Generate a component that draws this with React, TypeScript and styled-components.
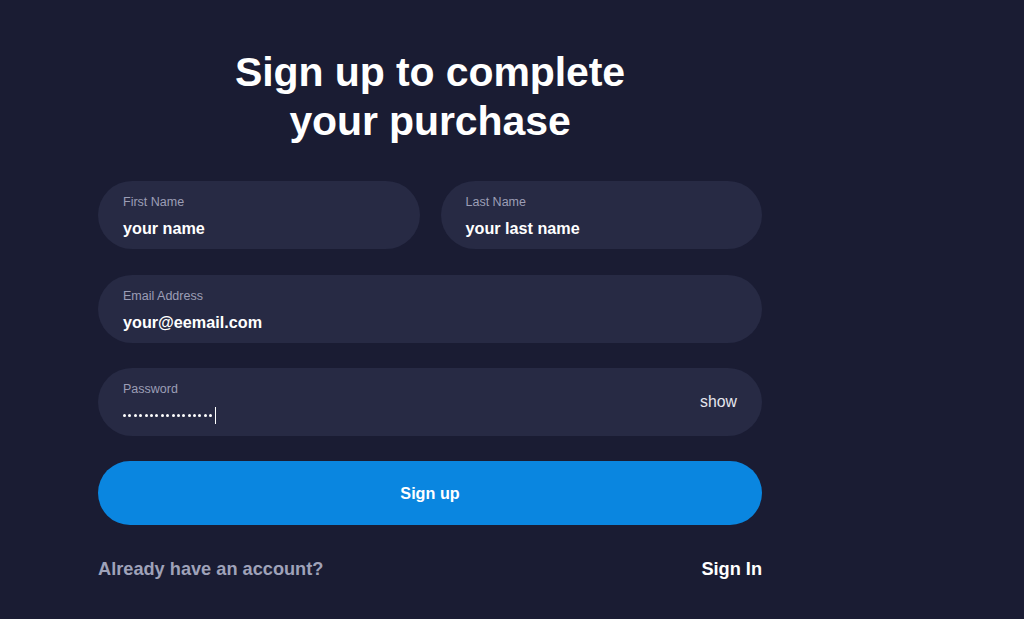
import React from "react";
import styled, { createGlobalStyle } from "styled-components";

const Global = createGlobalStyle`
  html, body { margin: 0; padding: 0; background: #1a1c33; }
  body { font-family: "Liberation Sans", Arial, sans-serif; }
  * { box-sizing: border-box; }
`;

const Page = styled.div`
  width: 1024px;
  height: 619px;
  background: #1a1c33;
  overflow: hidden;
  padding: 48px 0 0 98px;
`;

const Form = styled.div`
  width: 664px;
  display: flex;
  flex-direction: column;
`;

const Title = styled.h1`
  margin: 0 0 35px;
  text-align: center;
  color: #ffffff;
  font-size: 41px;
  font-weight: 700;
  line-height: 49px;
  letter-spacing: -0.1px;
`;

const Row = styled.div`
  display: grid;
  grid-template-columns: 1fr 1fr;
  gap: 21px;
  margin-bottom: 26px;
`;

const Field = styled.div`
  height: 68px;
  border-radius: 34px;
  background: #272a44;
  padding: 14px 25px 0;
  display: flex;
  align-items: center;
  margin-bottom: 25px;
  ${Row} & { margin-bottom: 0; }
`;

const FieldBody = styled.div`
  flex: 1;
  display: flex;
  flex-direction: column;
  align-self: flex-start;
`;

const Label = styled.div`
  font-size: 12.5px;
  color: #9c9eb6;
  line-height: 15px;
  margin-bottom: 9px;
`;

const Value = styled.div`
  font-size: 16.2px;
  font-weight: 700;
  color: #ffffff;
  line-height: 19px;
`;

const Dots = styled.div`
  display: flex;
  align-items: center;
  height: 19px;
`;

const Dot = styled.span`
  width: 3px;
  height: 3px;
  border-radius: 50%;
  background: #ffffff;
  margin-right: 2.4px;
`;

const Caret = styled.span`
  width: 1.5px;
  height: 17px;
  background: #ffffff;
`;

const Show = styled.span`
  font-size: 15.8px;
  color: #e6e6ee;
  margin-top: -14px;
`;

const Button = styled.button`
  height: 64px;
  border: none;
  border-radius: 32px;
  background: #0a86e0;
  color: #ffffff;
  font-family: "Liberation Sans", Arial, sans-serif;
  font-size: 16.2px;
  font-weight: 700;
`;

const Footer = styled.div`
  display: flex;
  justify-content: space-between;
  align-items: center;
  margin-top: 34px;
  font-size: 18.2px;
  font-weight: 700;
`;

const Muted = styled.span`
  color: #9fa2b9;
`;

const Link = styled.span`
  color: #ffffff;
`;

function TextField({ label, value }: { label: string; value: string }) {
  return (
    <Field>
      <FieldBody>
        <Label>{label}</Label>
        <Value>{value}</Value>
      </FieldBody>
    </Field>
  );
}

export default function App() {
  return (
    <>
      <Global />
      <Page>
        <Form>
          <Title>
            Sign up to complete
            <br />
            your purchase
          </Title>
          <Row>
            <TextField label="First Name" value="your name" />
            <TextField label="Last Name" value="your last name" />
          </Row>
          <TextField label="Email Address" value="your@eemail.com" />
          <Field>
            <FieldBody>
              <Label>Password</Label>
              <Dots>
                {Array.from({ length: 17 }).map((_, i) => (
                  <Dot key={i} />
                ))}
                <Caret />
              </Dots>
            </FieldBody>
            <Show>show</Show>
          </Field>
          <Button>Sign up</Button>
          <Footer>
            <Muted>Already have an account?</Muted>
            <Link>Sign In</Link>
          </Footer>
        </Form>
      </Page>
    </>
  );
}
